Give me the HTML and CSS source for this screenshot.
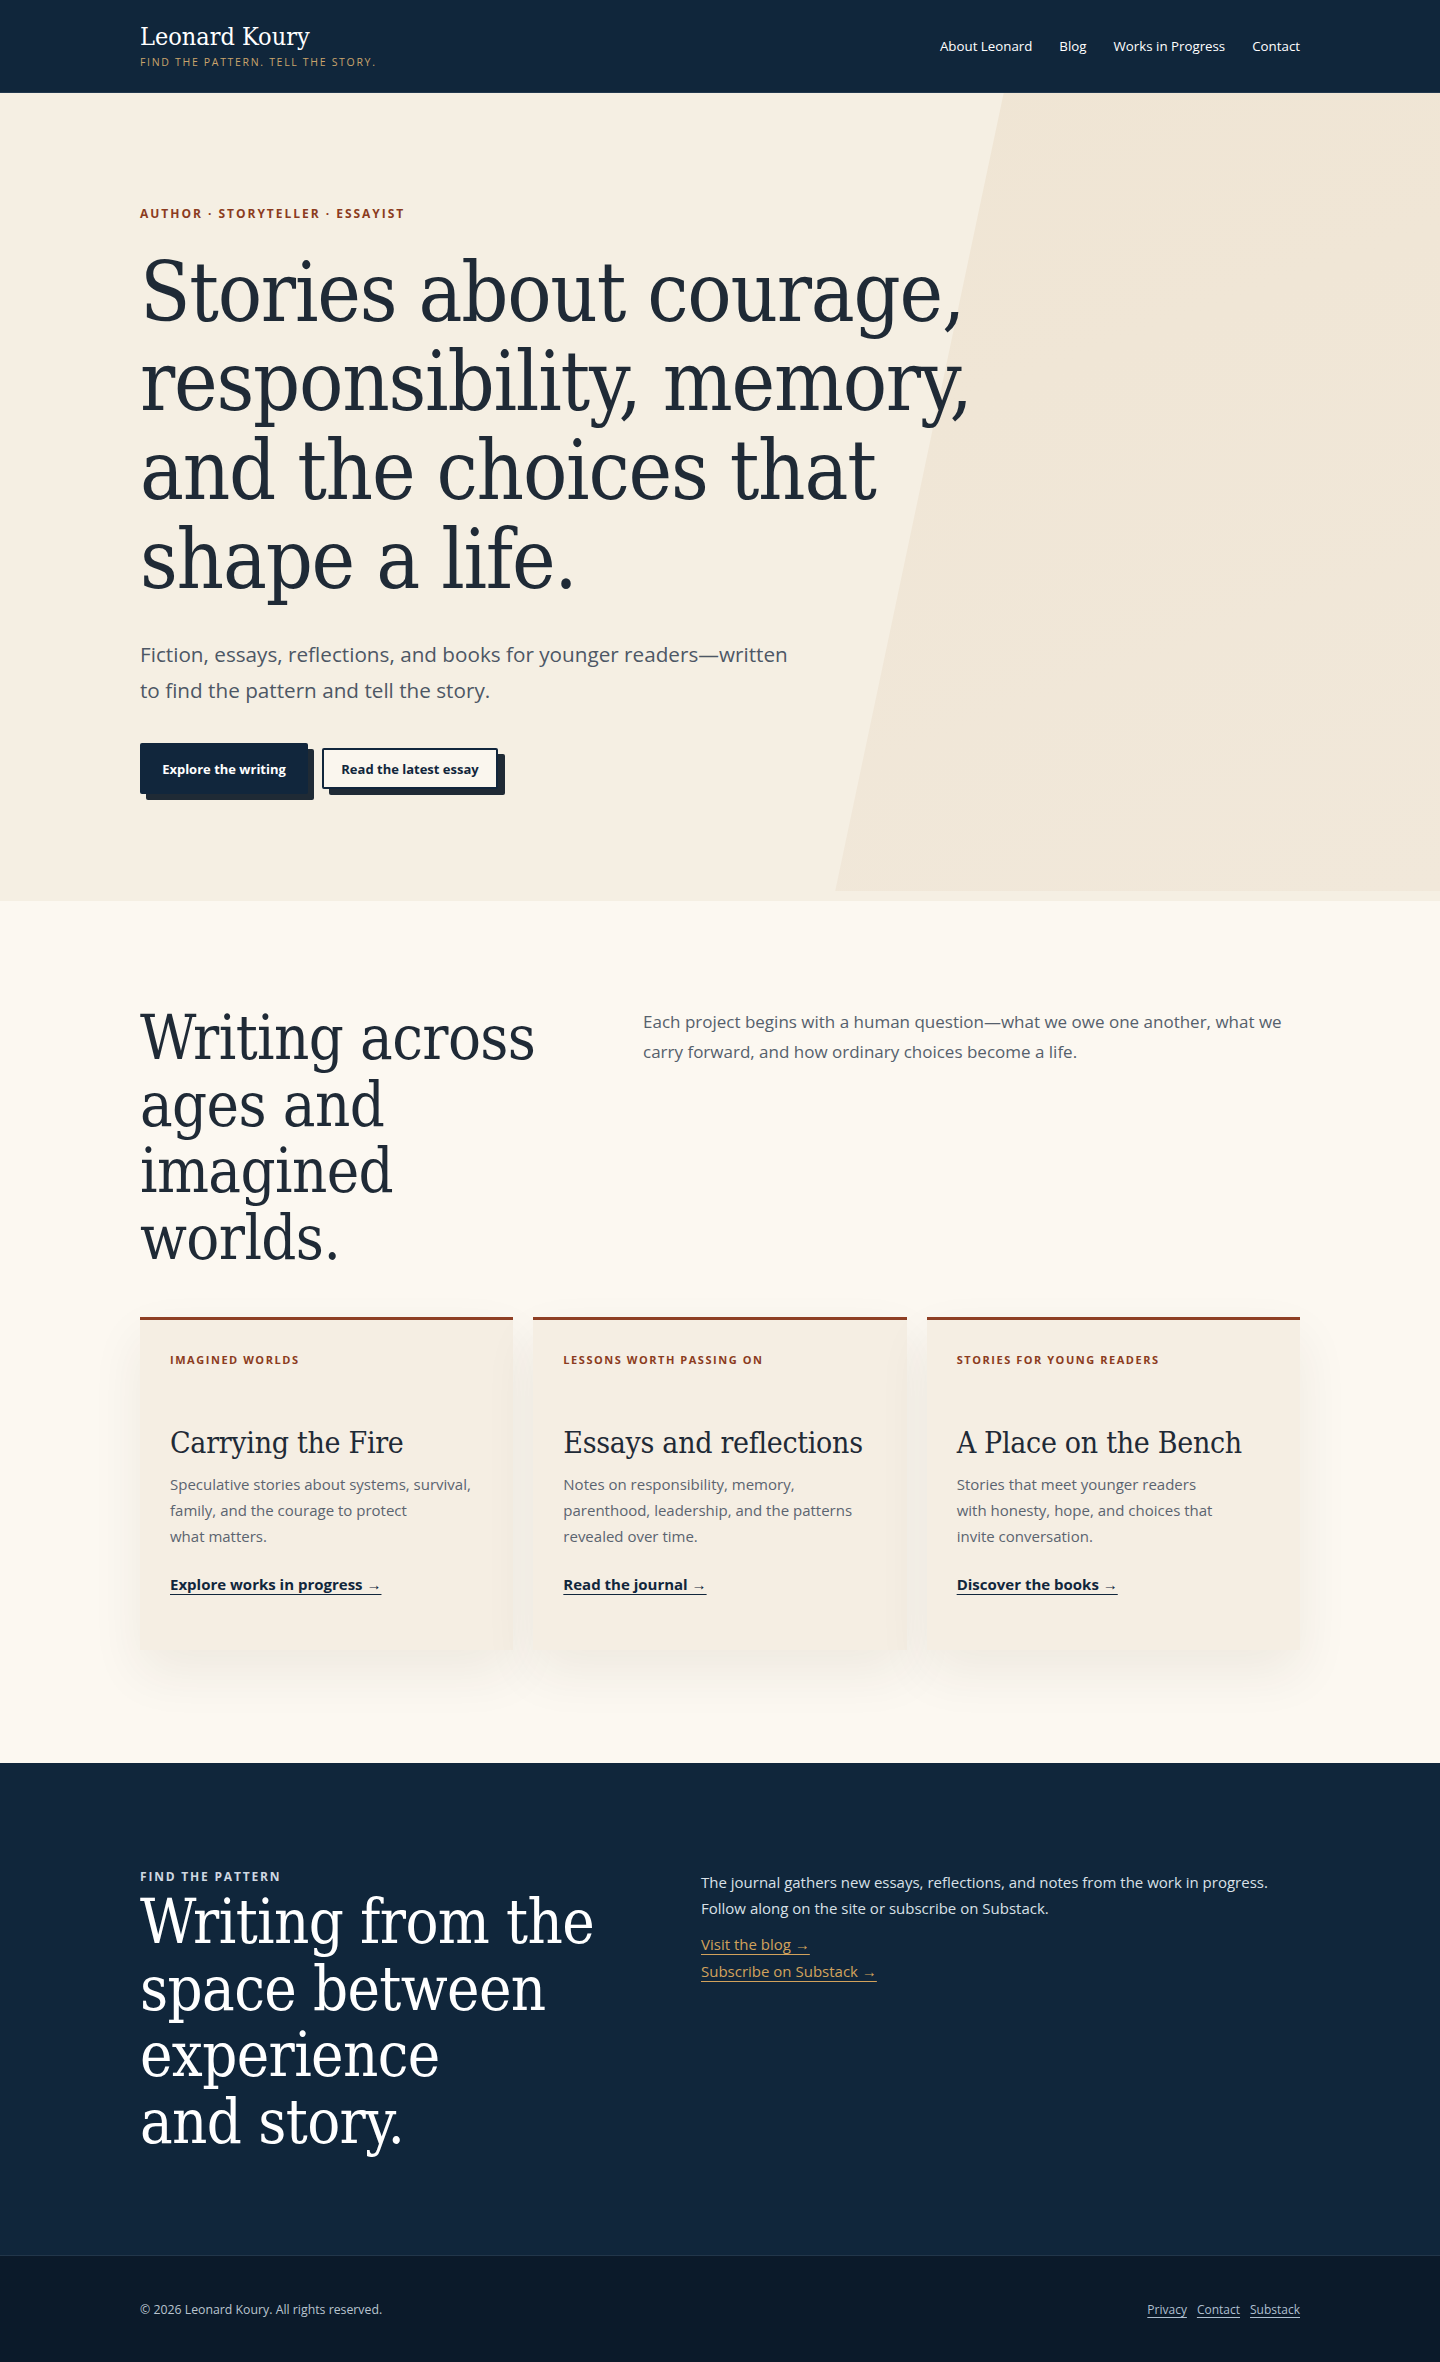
FILE: index.html
```html
<!DOCTYPE html>
<html lang="en">
<head>
<meta charset="utf-8">
<title>Leonard Koury — Find the pattern. Tell the story.</title>
<link rel="stylesheet" href="styles.css">
</head>
<body>
<header class="site-header">
  <div class="container header-inner">
    <a class="brand" href="#">
      <span class="brand-name">Leonard Koury</span>
      <span class="brand-tag">FIND THE PATTERN. TELL THE STORY.</span>
    </a>
    <nav class="main-nav">
      <a href="#">About Leonard</a>
      <a href="#">Blog</a>
      <a href="#">Works in Progress</a>
      <a href="#">Contact</a>
    </nav>
  </div>
</header>

<section class="hero">
  <div class="container hero-inner">
    <p class="eyebrow">AUTHOR · STORYTELLER · ESSAYIST</p>
    <h1 class="hero-title">Stories about courage,<br>responsibility, memory,<br>and the choices that<br>shape a life.</h1>
    <p class="hero-text">Fiction, essays, reflections, and books for younger readers—written<br>to find the pattern and tell the story.</p>
    <div class="hero-actions">
      <a class="btn btn-primary" href="#">Explore the writing</a>
      <a class="btn btn-secondary" href="#">Read the latest essay</a>
    </div>
  </div>
</section>

<section class="works">
  <div class="container">
    <div class="works-head">
      <h2 class="section-title">Writing across<br>ages and<br>imagined<br>worlds.</h2>
      <p class="works-intro">Each project begins with a human question—what we owe one another, what we<br>carry forward, and how ordinary choices become a life.</p>
    </div>
    <div class="cards">
      <article class="card">
        <p class="card-label">IMAGINED WORLDS</p>
        <h3 class="card-title">Carrying the Fire</h3>
        <p class="card-text">Speculative stories about systems, survival,<br>family, and the courage to protect<br>what matters.</p>
        <a class="card-link" href="#">Explore works in progress →</a>
      </article>
      <article class="card">
        <p class="card-label">LESSONS WORTH PASSING ON</p>
        <h3 class="card-title">Essays and reflections</h3>
        <p class="card-text">Notes on responsibility, memory,<br>parenthood, leadership, and the patterns<br>revealed over time.</p>
        <a class="card-link" href="#">Read the journal →</a>
      </article>
      <article class="card">
        <p class="card-label">STORIES FOR YOUNG READERS</p>
        <h3 class="card-title">A Place on the Bench</h3>
        <p class="card-text">Stories that meet younger readers<br>with honesty, hope, and choices that<br>invite conversation.</p>
        <a class="card-link" href="#">Discover the books →</a>
      </article>
    </div>
  </div>
</section>

<section class="journal">
  <div class="container journal-grid">
    <div class="journal-left">
      <p class="eyebrow eyebrow-light">FIND THE PATTERN</p>
      <h2 class="section-title section-title-light">Writing from the<br>space between<br>experience<br>and story.</h2>
    </div>
    <div class="journal-right">
      <p class="journal-text">The journal gathers new essays, reflections, and notes from the work in progress.<br>Follow along on the site or subscribe on Substack.</p>
      <div class="journal-links">
        <a href="#">Visit the blog →</a>
        <a href="#">Subscribe on Substack →</a>
      </div>
    </div>
  </div>
</section>

<footer class="site-footer">
  <div class="container footer-inner">
    <p class="copyright">© 2026 Leonard Koury. All rights reserved.</p>
    <nav class="footer-nav">
      <a href="#">Privacy</a>
      <a href="#">Contact</a>
      <a href="#">Substack</a>
    </nav>
  </div>
</footer>
</body>
</html>
```

FILE: styles.css
```css
* { box-sizing: border-box; margin: 0; padding: 0; }

:root {
  --navy: #10263b;
  --ink: #1f2a36;
  --rust: #8b3b20;
  --gold: #d2a25c;
  --serif: "DejaVu Serif Condensed", "DejaVu Serif", serif;
  --sans: "Open Sans", "Noto Sans", sans-serif;
}

body {
  font-family: var(--sans);
  color: var(--ink);
  background: #fcf8f1;
}

a { color: inherit; text-decoration: none; }

.container { width: 1160px; margin: 0 auto; }

/* Header */
.site-header {
  background: var(--navy);
  border-bottom: 1px solid #22384e;
}
.header-inner {
  height: 92px;
  display: flex;
  align-items: center;
  justify-content: space-between;
}
.brand { display: flex; flex-direction: column; gap: 3px; padding-bottom: 2px; }
.brand-name {
  font-family: var(--serif);
  font-stretch: condensed;
  font-size: 25px;
  line-height: 30px;
  color: #fff;
}
.brand-tag {
  font-size: 10.5px;
  line-height: 14px;
  letter-spacing: 0.16em;
  color: #c9a46c;
}
.main-nav { display: flex; gap: 27px; font-size: 13.3px; color: #fff; }

/* Hero */
.hero {
  position: relative;
  background: #f5efe3;
  padding: 113px 0 107px;
  overflow: hidden;
}
.hero::before {
  content: "";
  position: absolute;
  top: 0; right: 0; bottom: 10px; left: 0;
  background: linear-gradient(160deg, #efe4d2 0%, #f1e8da 100%);
  clip-path: polygon(69.7% 0, 100% 0, 100% 100%, 58% 100%);
}
.hero-inner { position: relative; }

.eyebrow {
  font-size: 12px;
  line-height: 16px;
  font-weight: 700;
  letter-spacing: 0.165em;
  color: var(--rust);
}
.hero-title {
  margin-top: 26px;
  font-family: var(--serif);
  font-stretch: condensed;
  font-weight: 400;
  font-size: 82px;
  line-height: 89px;
  letter-spacing: -0.015em;
  color: var(--ink);
}
.hero-text {
  margin-top: 32px;
  font-size: 20.7px;
  line-height: 36px;
  color: #4d5765;
}
.hero-actions {
  margin-top: 35px;
  display: flex;
  align-items: center;
  gap: 14px;
}
.btn {
  display: inline-flex;
  align-items: center;
  justify-content: center;
  font-size: 13px;
  font-weight: 700;
  border-radius: 2px;
}
.btn-primary {
  height: 51px;
  width: 168px;
  background: #11263c;
  color: #fff;
  box-shadow: 6px 6px 0 #1f2a35;
}
.btn-secondary {
  height: 41px;
  width: 176px;
  background: #faf6ee;
  color: #11263c;
  border: 2px solid #11263c;
  box-shadow: 7px 6px 0 #1f2a35;
}

/* Works */
.works { padding: 104px 0 113px; background: #fcf8f1; }
.works-head {
  display: grid;
  grid-template-columns: 439px 1fr;
  gap: 64px;
}
.section-title {
  font-family: var(--serif);
  font-stretch: condensed;
  font-weight: 400;
  font-size: 61px;
  line-height: 66.5px;
  letter-spacing: -0.01em;
  color: var(--ink);
}
.works-intro {
  padding-top: 1.5px;
  font-size: 17px;
  line-height: 30px;
  color: #55606c;
}
.cards {
  margin-top: 46px;
  display: grid;
  grid-template-columns: repeat(3, 1fr);
  gap: 20px;
}
.card {
  background: #f5eee3;
  border-top: 3px solid #8e3f24;
  padding: 32px 30px 55px;
  box-shadow: 0 22px 50px rgba(60, 40, 20, 0.07);
}
.card-label {
  font-size: 11px;
  line-height: 16px;
  font-weight: 700;
  letter-spacing: 0.14em;
  color: var(--rust);
}
.card-title {
  margin-top: 57px;
  font-family: var(--serif);
  font-stretch: condensed;
  font-weight: 400;
  font-size: 30px;
  line-height: 36px;
  letter-spacing: -0.01em;
  color: var(--ink);
}
.card-text {
  margin-top: 10px;
  font-size: 15px;
  line-height: 26px;
  color: #5b6470;
}
.card-link {
  display: inline-block;
  margin-top: 24px;
  font-size: 15px;
  line-height: 22px;
  font-weight: 700;
  color: #11263c;
  text-decoration: underline;
  text-underline-offset: 4px;
  text-decoration-thickness: 1px;
}

/* Journal */
.journal {
  background: var(--navy);
  padding: 106px 0 100px;
  color: #fff;
}
.journal-grid {
  display: grid;
  grid-template-columns: 513px 1fr;
  gap: 48px;
}
.eyebrow-light { color: #cfd8e2; font-size: 12px; letter-spacing: 0.15em; }
.section-title-light { color: #fff; margin-top: 4px; }
.journal-text {
  font-size: 15px;
  line-height: 26px;
  color: #d9e0e7;
}
.journal-links {
  margin-top: 12px;
  display: flex;
  flex-direction: column;
  align-items: flex-start;
  gap: 5px;
}
.journal-links a {
  font-size: 15px;
  line-height: 22px;
  color: var(--gold);
  text-decoration: underline;
  text-underline-offset: 4px;
  text-decoration-thickness: 1px;
}

/* Footer */
.site-footer {
  background: #0b1a2a;
  border-top: 1px solid #22364a;
}
.footer-inner {
  height: 106px;
  display: flex;
  align-items: center;
  justify-content: space-between;
}
.copyright { font-size: 12.3px; color: #b9c4cf; }
.footer-nav { display: flex; gap: 10px; font-size: 12px; }
.footer-nav a {
  color: #aebfd0;
  text-decoration: underline;
  text-underline-offset: 3px;
}
```
